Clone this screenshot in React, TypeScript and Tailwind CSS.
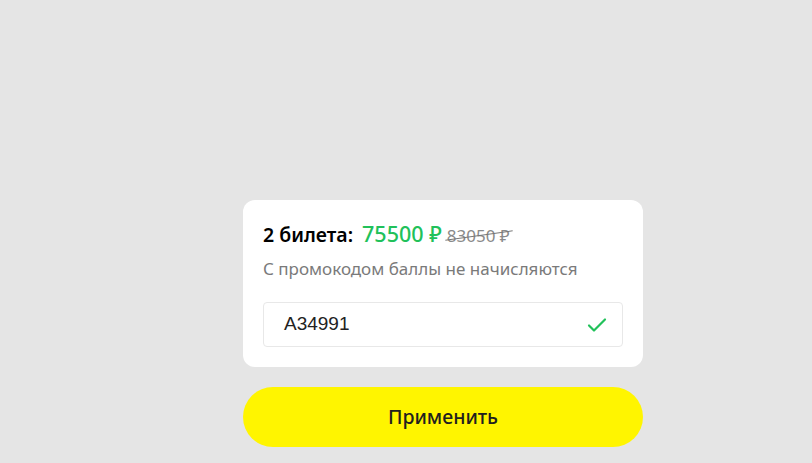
export default function App() {
  return (
    <div
      className="min-h-[463px] w-full bg-[#e5e5e5] flex flex-col pl-[243px] pt-[200px]"
      style={{ fontFamily: '"Noto Sans", Inter, sans-serif' }}
    >
      <div className="w-[400px] flex flex-col gap-5">
        {/* Promo card */}
        <div className="bg-white rounded-xl px-5 pt-[18px] pb-5">
          <div className="flex items-baseline h-[28px]">
            <span className="text-[19.5px] font-semibold text-black">2 билета:</span>
            <span className="ml-[9px] text-[21.5px] font-medium text-[#21c15a]">75500 ₽</span>
            <span className="relative ml-[5px] text-[17px] text-[#8a8a8a]">
              83050 ₽
              <span className="absolute left-[-2px] right-[-3px] top-[12px] h-px bg-[#777] -rotate-[8deg]"></span>
            </span>
          </div>
          <div className="mt-[11px] text-[17px] text-[#7a7a7a] leading-[24px]">
            С промокодом баллы не начисляются
          </div>
          <div className="mt-[21px] h-[45px] border border-[#e8e8e8] rounded flex items-center justify-between pl-5 pr-[15px]">
            <span
              className="text-[19px] text-[#222]"
              style={{ fontFamily: '"Liberation Sans", Arial, sans-serif' }}
            >
              A34991
            </span>
            <svg width="20" height="16" viewBox="0 0 20 16" fill="none">
              <path d="M2 8.5l5 5L18 2.5" stroke="#21c15a" strokeWidth="2.2" strokeLinecap="round" strokeLinejoin="round" />
            </svg>
          </div>
        </div>

        {/* Apply button */}
        <button className="h-[60px] w-full rounded-full bg-[#fff500] text-[19.5px] text-[#21201f] font-medium">
          Применить
        </button>
      </div>
    </div>
  );
}
